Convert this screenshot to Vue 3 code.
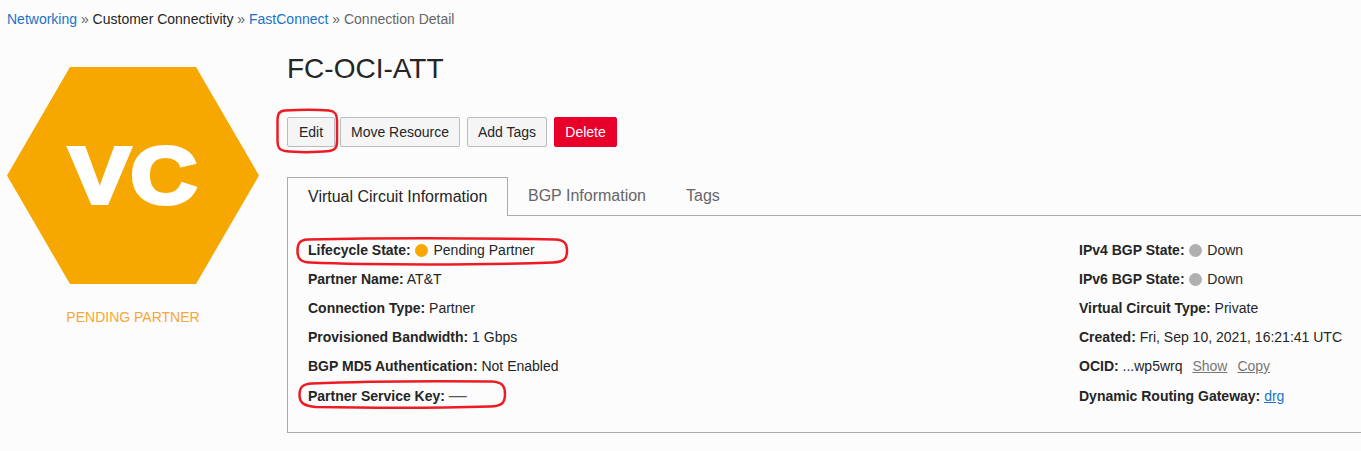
<script setup>
const leftRows = [
  { label: 'Partner Name:', value: 'AT&T' },
  { label: 'Connection Type:', value: 'Partner' },
  { label: 'Provisioned Bandwidth:', value: '1 Gbps' },
  { label: 'BGP MD5 Authentication:', value: 'Not Enabled' },
]
</script>

<template>
  <div class="page">
    <nav class="crumbs">
      <a class="link">Networking</a><span class="sep"> » </span><span class="dark">Customer Connectivity</span><span class="sep"> » </span><a class="link">FastConnect</a><span class="sep"> » </span><span class="current">Connection Detail</span>
    </nav>
    <div class="main">
      <aside class="side">
        <svg class="hex" width="252" height="217" viewBox="0 0 252 217">
          <polygon points="63,0 189,0 252,108.500 189,217 63,217 0,108.500" fill="#f6a800" />
          <text transform="translate(126 136) scale(1.150 1)" text-anchor="middle" class="hex-text">VC</text>
        </svg>
        <div class="state">PENDING PARTNER</div>
      </aside>
      <section class="content">
        <h1 class="title">FC-OCI-ATT</h1>
        <div class="actions">
          <button class="btn">Edit</button>
          <button class="btn move">Move Resource</button>
          <button class="btn tags">Add Tags</button>
          <button class="btn danger">Delete</button>
        </div>
        <div class="tabs">
          <div class="tab active">Virtual Circuit Information</div>
          <div class="tab">BGP Information</div>
          <div class="tab">Tags</div>
        </div>
        <div class="panel">
          <div class="col">
            <div class="row"><b>Lifecycle State:</b> <i class="dot orange"></i> Pending Partner</div>
            <div v-for="r in leftRows" :key="r.label" class="row"><b>{{ r.label }}</b> {{ r.value }}</div>
            <div class="row"><b>Partner Service Key:</b> <span class="dash">—</span></div>
          </div>
          <div class="col right">
            <div class="row"><b>IPv4 BGP State:</b> <i class="dot grey"></i> Down</div>
            <div class="row"><b>IPv6 BGP State:</b> <i class="dot grey"></i> Down</div>
            <div class="row"><b>Virtual Circuit Type:</b> Private</div>
            <div class="row"><b>Created:</b> Fri, Sep 10, 2021, 16:21:41 UTC</div>
            <div class="row"><b>OCID:</b> ...wp5wrq <a class="muted first">Show</a><a class="muted">Copy</a></div>
            <div class="row"><b>Dynamic Routing Gateway:</b> <a class="link under">drg</a></div>
          </div>
        </div>
      </section>
    </div>
    <svg class="marks" width="1361" height="451" viewBox="0 0 1361 451" fill="none" stroke="#ed1c24" stroke-width="2.500">
      <path d="M285 110.500 C300 109.500 318 109.500 329 110.500 C335 111 337 114 337 121 L337 141 C337 148 335 150 329 151 C316 152.500 296 152.500 285 151 C279 150 277.500 147 277.500 141 L277.500 121 C277.500 114 279 111 285 110.500 Z" />
      <path d="M308 239.500 C370 238 480 238 555 239.500 C564 240 567 243 567 251 C567 259 564 262 553 262.500 C480 265 370 265 310 262.500 C301 262 297.500 259 297.500 251 C297.500 243 300 240 308 239.500 Z" />
      <path d="M312 383.500 C370 381 440 381 492 381.500 C502 382 505 386 505 394 C505 403 502 406 490 406.500 C440 408 370 408 316 407 C304 406 299.500 403 299.500 395 C299.500 387 303 384 312 383.500 Z" />
    </svg>
  </div>
</template>

<style>
html, body { margin: 0; background: #fcfcfc; }
</style>

<style scoped>
.page {
  position: relative;
  width: 1361px;
  height: 451px;
  overflow: hidden;
  background: #fcfcfc;
  font-family: "Liberation Sans", Arial, sans-serif;
  font-size: 14px;
  color: #252525;
}
.crumbs { padding: 11px 0 0 7px; height: 16px; line-height: 16px; }
.link { color: #1a73c9; }
.sep { color: #5f5f5f; }
.dark { color: #252525; }
.current { color: #666; }
.main { display: flex; margin-top: 12px; }
.side { width: 287px; flex: none; padding: 28px 0 0 7px; box-sizing: border-box; }
.hex { display: block; }
.hex-text {
  font-family: "Liberation Sans", Arial, sans-serif;
  font-weight: 700;
  font-size: 80px;
  fill: #fff;
  stroke: #fff;
  stroke-width: 4px;
}
.state { width: 252px; margin-top: 25px; text-align: center; color: #f7a733; line-height: 16px; }
.content { flex: 1; min-width: 0; }
.title { margin: 14px 0 0; font-size: 28px; font-weight: 400; line-height: 32px; height: 32px; color: #252525; }
.actions { display: flex; margin-top: 32px; height: 30px; }
.btn {
  font: inherit;
  height: 30px;
  padding: 0;
  width: 48px;
  border: 1px solid #b9bcc0;
  border-radius: 2px;
  background: #f5f5f6;
  color: #252525;
}
.move { width: 120px; margin-left: 5px; }
.tags { width: 80px; margin-left: 7px; }
.danger { width: 63px; margin-left: 7px; background: #e8002b; border-color: #e8002b; color: #fff; }
.tabs { display: flex; margin-top: 30px; height: 38px; border-bottom: 1px solid #ababab; font-size: 16px; color: #666; white-space: nowrap; }
.tab { padding: 0 20px; line-height: 37px; }
.tab.active {
  width: 221px;
  box-sizing: border-box;
  height: 39px;
  border: 1px solid #ababab;
  border-bottom: none;
  background: #fcfcfc;
  color: #252525;
  line-height: 38px;
}
.panel {
  display: flex;
  height: 217px;
  box-sizing: border-box;
  border-left: 1px solid #ababab;
  border-bottom: 1px solid #ababab;
  padding: 20px 0 0 20px;
}
.col { width: 771px; flex: none; }
.right { width: auto; }
.row { height: 29px; line-height: 29px; white-space: pre-wrap; }
.row:last-child { margin-top: 1px; }
b { font-weight: 700; }
.dot { display: inline-block; width: 13px; height: 13px; border-radius: 50%; vertical-align: -2px; margin: 0 1.500px 0 0.500px; }
.orange { background: #f6a800; }
.grey { background: #b0b0b0; }
.dash { color: #555; font-size: 18px; line-height: 1; }
.muted { color: #777; text-decoration: underline; margin-left: 10px; }
.first { margin-left: 6px; }
.under { text-decoration: underline; }
.marks { position: absolute; left: 0; top: 0; pointer-events: none; }
</style>
